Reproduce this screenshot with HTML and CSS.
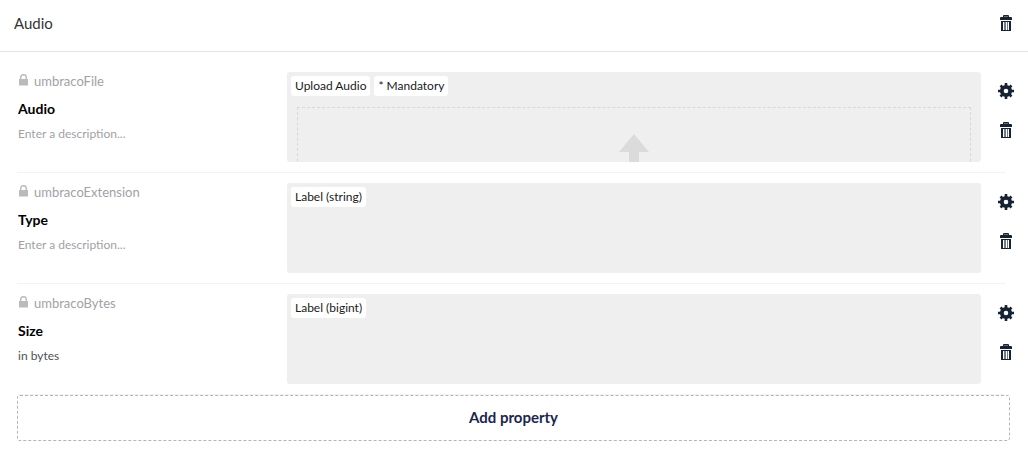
FILE: index.html
```
<!DOCTYPE html>
<html lang="en">

<head>
    <meta charset="UTF-8">
    <meta name="viewport" content="width=device-width,initial-scale=1.0">
    <title>Audio</title>
    <link rel="stylesheet" href="styles.css">
</head>

<body>
    <!-- Shared icons -->
    <svg class="sprite" aria-hidden="true">
        <symbol id="icon-trash" viewBox="0 0 16 16">
            <path d="M5 2V1q0-1 1-1h4q1 0 1 1v1h2q1 0 1 1v2H2V3q0-1 1-1z" />
            <path d="M6 1h4v1H6z" fill="#fff" opacity=".35" />
            <path fill-rule="evenodd" d="M3 6h10v10H3zM5 7v8h6V7z" />
            <path d="M6 7h1v8H6zM7 7h1v8H7zM9 7h1v8H9z" opacity=".6" />
        </symbol>
        <symbol id="icon-gear" viewBox="0 0 16 16">
            <circle cx="8" cy="8" r="4.200" fill="none" stroke="currentColor" stroke-width="3.800" />
            <path d="M8 0v3M8 13v3M0 8h3M13 8h3M2.500 2.500l2 2M11.500 11.500l2 2M2.500 13.500l2-2M11.500 4.500l2-2" stroke="currentColor" stroke-width="2.600" />
        </symbol>
        <symbol id="icon-lock" viewBox="0 0 9 12">
            <path d="M0 5h9v6.500H0z" />
            <path d="M1.700 5.500V3.500a2.800 2.800 0 0 1 5.600 0v2" fill="none" stroke="currentColor" stroke-width="1.400" />
        </symbol>
    </svg>

    <section class="group">
        <header class="group-header">
            <input class="group-name" type="text" value="Audio" aria-label="Group name">
            <button class="icon-btn" type="button" aria-label="Delete group"><svg><use href="#icon-trash" /></svg></button>
        </header>

        <ul class="properties">
            <li class="property">
                <div class="meta">
                    <div class="alias"><svg><use href="#icon-lock" /></svg>umbracoFile</div>
                    <input class="label" type="text" value="Audio" aria-label="Property name">
                    <input class="description" type="text" placeholder="Enter a description..." aria-label="Description">
                </div>
                <div class="preview">
                    <div class="tags">
                        <span class="tag">Upload Audio</span>
                        <span class="tag">* Mandatory</span>
                    </div>
                    <div class="dropzone">
                        <svg viewBox="0 0 30 36"><path d="M15 0l15 18H20v18H10V18H0z" /></svg>
                    </div>
                </div>
                <div class="actions">
                    <button class="icon-btn" type="button" aria-label="Settings"><svg><use href="#icon-gear" /></svg></button>
                    <button class="icon-btn" type="button" aria-label="Delete"><svg><use href="#icon-trash" /></svg></button>
                </div>
            </li>
            <li class="property">
                <div class="meta">
                    <div class="alias"><svg><use href="#icon-lock" /></svg>umbracoExtension</div>
                    <input class="label" type="text" value="Type" aria-label="Property name">
                    <input class="description" type="text" placeholder="Enter a description..." aria-label="Description">
                </div>
                <div class="preview">
                    <div class="tags">
                        <span class="tag">Label (string)</span>
                    </div>
                </div>
                <div class="actions">
                    <button class="icon-btn" type="button" aria-label="Settings"><svg><use href="#icon-gear" /></svg></button>
                    <button class="icon-btn" type="button" aria-label="Delete"><svg><use href="#icon-trash" /></svg></button>
                </div>
            </li>
            <li class="property">
                <div class="meta">
                    <div class="alias"><svg><use href="#icon-lock" /></svg>umbracoBytes</div>
                    <input class="label" type="text" value="Size" aria-label="Property name">
                    <input class="description" type="text" value="in bytes" placeholder="Enter a description..." aria-label="Description">
                </div>
                <div class="preview">
                    <div class="tags">
                        <span class="tag">Label (bigint)</span>
                    </div>
                </div>
                <div class="actions">
                    <button class="icon-btn" type="button" aria-label="Settings"><svg><use href="#icon-gear" /></svg></button>
                    <button class="icon-btn" type="button" aria-label="Delete"><svg><use href="#icon-trash" /></svg></button>
                </div>
            </li>
        </ul>

        <button class="add-property" type="button">Add property</button>
    </section>
</body>

</html>
```
FILE: styles.css
```
* {
    padding: 0;
    margin: 0;
    box-sizing: border-box;
}

body {
    background: #fff;
    color: #162335;
    font-family: Lato, sans-serif;
}

input,
button {
    font-family: inherit;
    border: none;
    background: none;
    outline: none;
}

.sprite {
    display: none;
}

.group {
    display: flex;
    flex-direction: column;
}

/* Group title bar */
.group-header {
    display: flex;
    justify-content: space-between;
    align-items: center;
    padding: 13px 14px 18px;
    border-bottom: 1px solid #e3e3e5;
}

.group-name {
    flex: 1;
    height: 20px;
    font-size: 15px;
    color: #343434;
}

.icon-btn {
    display: block;
    width: 16px;
    height: 16px;
    color: #162335;
    cursor: pointer;
}

.icon-btn svg {
    display: block;
    width: 16px;
    height: 16px;
    fill: currentColor;
}

/* Property rows */
.properties {
    list-style: none;
    padding: 10px 23px 0 17px;
}

.property {
    display: flex;
    padding: 10px 0;
    border-bottom: 1px solid #f3f3f5;
}

.meta {
    display: flex;
    flex-direction: column;
    width: 270px;
    padding-left: 1px;
}

.alias {
    display: flex;
    align-items: center;
    gap: 6px;
    height: 18px;
    padding-left: 1px;
    font-size: 13px;
    color: #a2a1a6;
}

.alias svg {
    width: 9px;
    height: 12px;
    margin-bottom: 3px;
    fill: currentColor;
    color: #bbbabf;
}

.label {
    height: 20px;
    margin-top: 8px;
    font-size: 14px;
    font-weight: bold;
    color: #000;
}

.description {
    height: 16px;
    margin-top: 7px;
    font-size: 12px;
    color: #515054;
}

.description::placeholder {
    color: #a2a1a6;
}

/* Editor preview */
.preview {
    flex: 1;
    height: 90px;
    padding: 4px;
    overflow: hidden;
    border-radius: 3px;
    background: #efefef;
}

.tags {
    display: flex;
    gap: 4px;
}

.tag {
    height: 20px;
    padding: 0 4px;
    border-radius: 3px;
    background: #fff;
    font-size: 12px;
    line-height: 20px;
    color: #1a1a1a;
}

.dropzone {
    display: flex;
    justify-content: center;
    margin: 11px 6px 0;
    padding: 26px 0;
    border: 1px dashed #d8d7d9;
}

.dropzone svg {
    width: 30px;
    height: 36px;
    fill: #dbdbdb;
}

.actions {
    display: flex;
    flex-direction: column;
    gap: 23px;
    margin: 0 -9px 0 17px;
    padding-top: 11px;
}

.add-property {
    height: 46px;
    margin: 0 18px 19px 17px;
    padding-bottom: 3px;
    border: 1px dashed #b5b5b8;
    border-radius: 3px;
    font-size: 15px;
    font-weight: bold;
    color: #1b264f;
    cursor: pointer;
}
```
